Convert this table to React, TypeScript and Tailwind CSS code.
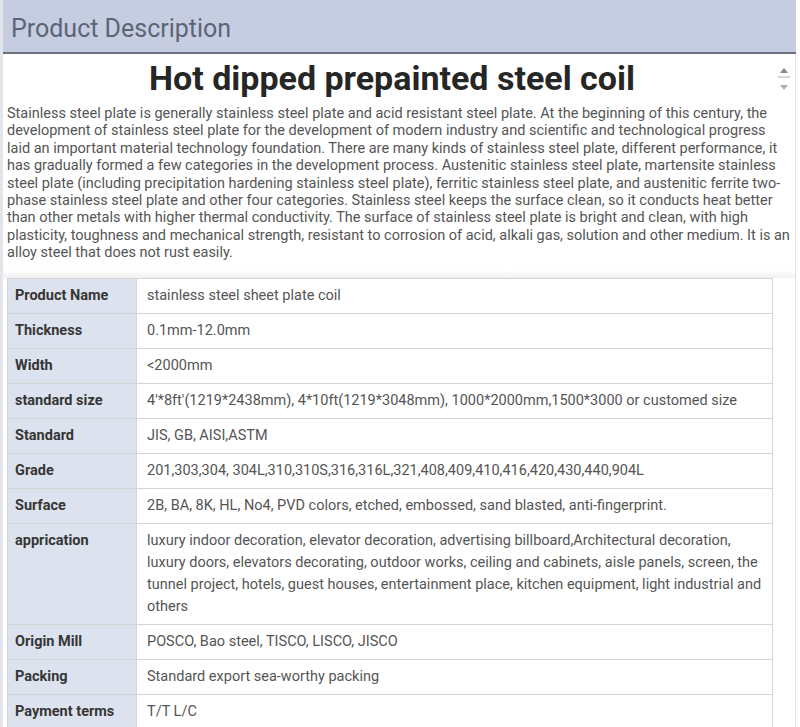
const specs = [
  { label: "Product Name", value: "stainless steel sheet plate coil" },
  { label: "Thickness", value: "0.1mm-12.0mm" },
  { label: "Width", value: "<2000mm" },
  { label: "standard size", value: "4'*8ft'(1219*2438mm), 4*10ft(1219*3048mm), 1000*2000mm,1500*3000 or customed size" },
  { label: "Standard", value: "JIS, GB, AISI,ASTM" },
  { label: "Grade", value: "201,303,304, 304L,310,310S,316,316L,321,408,409,410,416,420,430,440,904L" },
  { label: "Surface", value: "2B, BA, 8K, HL, No4, PVD colors, etched, embossed, sand blasted,  anti-fingerprint." },
  {
    label: "apprication",
    value:
      "luxury indoor decoration, elevator decoration, advertising billboard,Architectural decoration, luxury doors, elevators decorating, outdoor works, ceiling and cabinets, aisle panels, screen, the tunnel project, hotels, guest houses, entertainment place, kitchen equipment, light industrial and others",
  },
  { label: "Origin Mill", value: "POSCO, Bao steel, TISCO, LISCO, JISCO" },
  { label: "Packing", value: "Standard export sea-worthy packing" },
  { label: "Payment terms", value: "T/T L/C" },
]

export default function App() {
  return (
    <div className="w-[800px] h-[727px] overflow-hidden bg-white font-['Roboto',sans-serif] border-l-[3px] border-[#e3e5ea]">
      {/* Header */}
      <div className="h-[54px] mr-[4px] bg-[#c6cde0] border-b-2 border-[#6b717c] flex items-center pl-[8px] pt-[4px]">
        <h1 className="text-[25px] text-[#5b6578] leading-none">Product Description</h1>
      </div>

      <div className="relative mr-[4px] border-r border-[#e6e6e6] h-full">
        {/* scroll arrows */}
        <div className="absolute right-[4px] top-[14px] w-[14px] flex flex-col items-center gap-[3px]" aria-hidden="true">
          <span className="block w-0 h-0 border-l-[4px] border-r-[4px] border-b-[5px] border-l-transparent border-r-transparent border-b-[#8a8a8a]" />
          <span className="block w-[12px] h-[2px] bg-[#d8d8d8]" />
          <span className="block mt-[4px] w-0 h-0 border-l-[4px] border-r-[4px] border-t-[5px] border-l-transparent border-r-transparent border-t-[#b0b0b0]" />
        </div>

        <h2 className="text-center text-[34px] font-bold text-[#262626] leading-[40px] pt-[4px] pr-[14px]">
          Hot dipped prepainted steel coil
        </h2>

        <p className="pl-[4px] pr-[5px] mt-[7px] text-[14.5px] leading-[17.4px] text-[#555]">
          Stainless steel plate is generally stainless steel plate and acid resistant steel plate. At the beginning of this century, the
          development of stainless steel plate for the development of modern industry and scientific and technological progress laid an
          important material technology foundation. There are many kinds of stainless steel plate, different performance, it has
          gradually formed a few categories in the development process. Austenitic stainless steel plate, martensite stainless steel
          plate (including precipitation hardening stainless steel plate), ferritic stainless steel plate, and austenitic ferrite
          two-phase stainless steel plate and other four categories. Stainless steel keeps the surface clean, so it conducts heat better
          than other metals with higher thermal conductivity. The surface of stainless steel plate is bright and clean, with high
          plasticity, toughness and mechanical strength, resistant to corrosion of acid, alkali gas, solution and other medium. It is an
          alloy steel that does not rust easily.
        </p>

        <div className="mt-[8px] h-[8px] bg-gradient-to-b from-white to-[#f1f1f1]" />

        <div className="pl-[4px] pr-[22px]">
          <table className="w-full border-collapse text-[14.5px]">
            <tbody>
              {specs.map((row) => (
                <tr key={row.label}>
                  <td className="w-[129px] align-top bg-[#dde3ee] border border-[#d4d4d4] px-[7px] py-[6px] leading-[22px] font-bold text-[#363636]">
                    {row.label}
                  </td>
                  <td className="align-top border border-[#d4d4d4] pl-[10px] pr-[6px] py-[6px] leading-[22px] text-[#555]">
                    {row.value}
                  </td>
                </tr>
              ))}
            </tbody>
          </table>
        </div>
      </div>
    </div>
  )
}
